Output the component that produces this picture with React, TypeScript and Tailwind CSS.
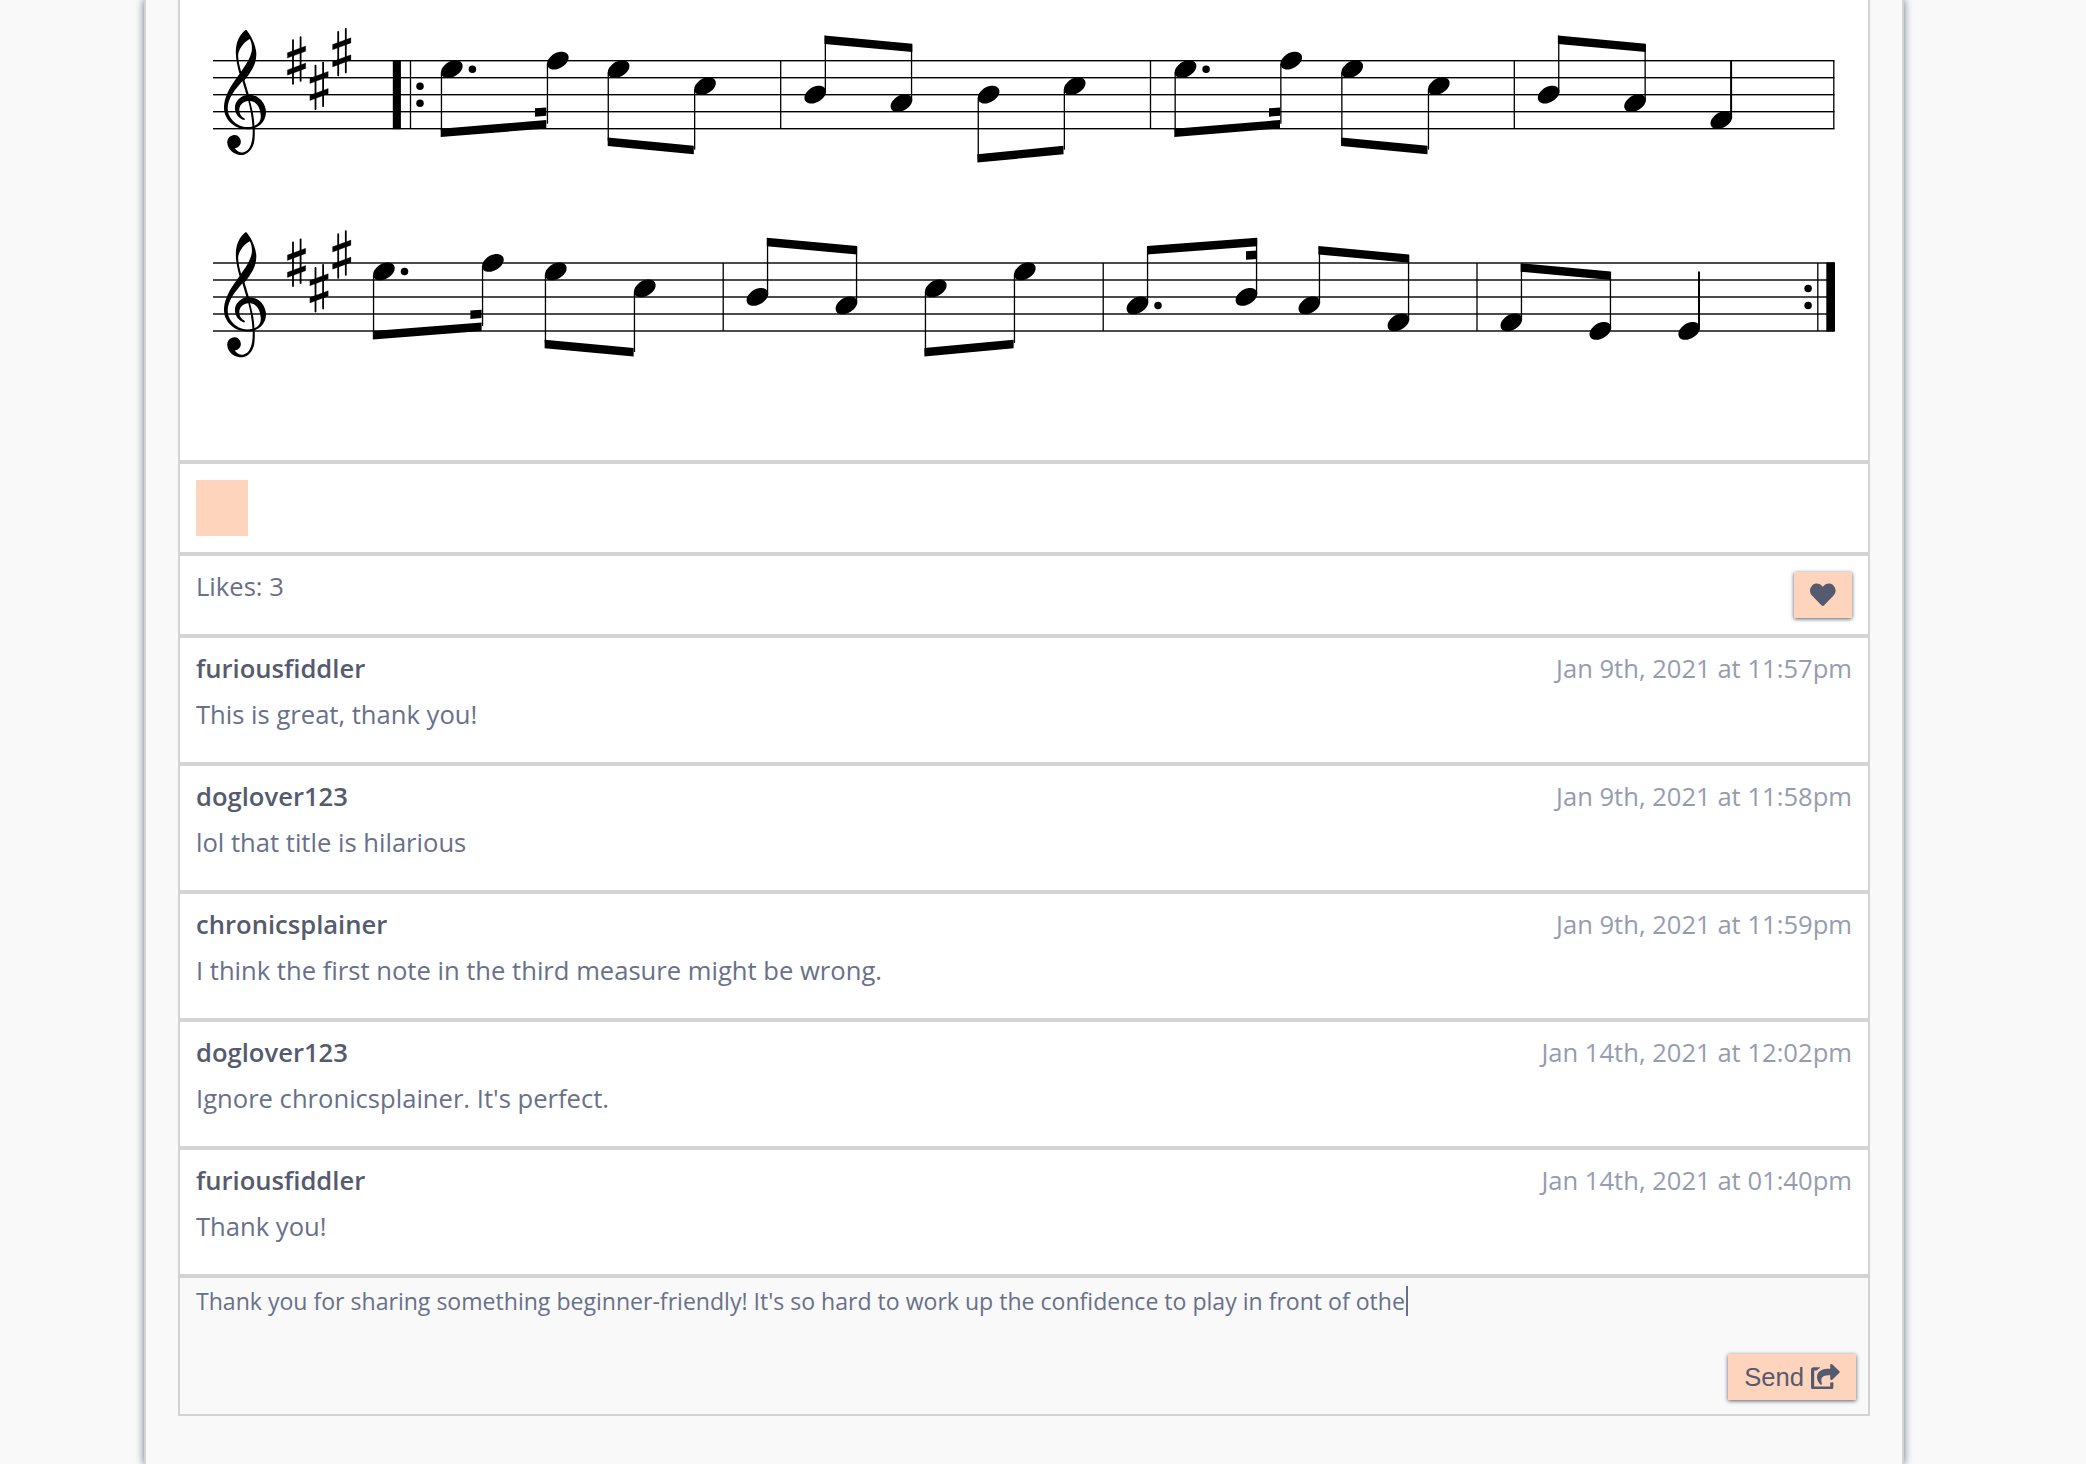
import React from "react";
import { FaHeart, FaShareSquare } from "react-icons/fa";

type Note = {
  x: number; // left edge of the head
  y: number; // head centre, measured from the top staff line
  stem: "up" | "down";
  end: number; // stem end, measured from the top staff line
  dot?: boolean;
  thick?: boolean;
};
type Beam = { x1: number; x2: number; y1: number; y2: number };
type Staff = { top: number; notes: Note[]; beams: Beam[]; bars: number[] };

const S = 17;
const START = 213;
const END = 1834.5;

const staves: Staff[] = [
  {
    top: 60.7,
    bars: [410.5, 780.7, 1150.5, 1514.3, 1833.8],
    notes: [
      { x: 441, y: 8.5, stem: "down", end: 70, dot: true },
      { x: 547, y: 0, stem: "down", end: 63 },
      { x: 607.8, y: 8.5, stem: "down", end: 80 },
      { x: 694.2, y: 25.5, stem: "down", end: 89 },
      { x: 804.4, y: 34, stem: "up", end: -25 },
      { x: 890.6, y: 42.5, stem: "up", end: -16 },
      { x: 977.8, y: 34, stem: "down", end: 98 },
      { x: 1063.9, y: 25.5, stem: "down", end: 89 },
      { x: 1174.7, y: 8.5, stem: "down", end: 70, dot: true },
      { x: 1280.4, y: 0, stem: "down", end: 63 },
      { x: 1341.4, y: 8.5, stem: "down", end: 80 },
      { x: 1428, y: 25.5, stem: "down", end: 89 },
      { x: 1537.8, y: 34, stem: "up", end: -25 },
      { x: 1624.2, y: 42.5, stem: "up", end: -16 },
      { x: 1710.5, y: 59.5, stem: "up", end: 0, thick: true },
    ],
    beams: [
      { x1: 440.7, x2: 546.3, y1: 68, y2: 59.3 },
      { x1: 535, x2: 546.3, y1: 47.6, y2: 46.7 },
      { x1: 607.7, x2: 693.8, y1: 76.8, y2: 85.1 },
      { x1: 824.5, x2: 912.3, y1: -25.2, y2: -17 },
      { x1: 977.4, x2: 1063.5, y1: 93.5, y2: 85.1 },
      { x1: 1174.3, x2: 1280, y1: 68, y2: 59.3 },
      { x1: 1269, x2: 1280, y1: 47.6, y2: 46.7 },
      { x1: 1341, x2: 1427.5, y1: 76.8, y2: 85.1 },
      { x1: 1557.9, x2: 1645.8, y1: -25.2, y2: -17 },
    ],
  },
  {
    top: 263,
    bars: [723.2, 1103.2, 1477, 1817.8],
    notes: [
      { x: 373.1, y: 8.5, stem: "down", end: 70, dot: true },
      { x: 482.1, y: 0, stem: "down", end: 63 },
      { x: 545, y: 8.5, stem: "down", end: 80 },
      { x: 634, y: 25.5, stem: "down", end: 89 },
      { x: 746.6, y: 34, stem: "up", end: -25 },
      { x: 835.6, y: 42.5, stem: "up", end: -16 },
      { x: 925, y: 25.5, stem: "down", end: 89 },
      { x: 1014, y: 8.5, stem: "down", end: 80 },
      { x: 1126.6, y: 42.5, stem: "up", end: -16, dot: true },
      { x: 1235.6, y: 34, stem: "up", end: -25 },
      { x: 1298.5, y: 42.5, stem: "up", end: -16 },
      { x: 1387.6, y: 59.5, stem: "up", end: -8 },
      { x: 1500.5, y: 59.5, stem: "up", end: 1 },
      { x: 1589.5, y: 68, stem: "up", end: 9 },
      { x: 1678.4, y: 68, stem: "up", end: 8.5, thick: true },
    ],
    beams: [
      { x1: 372.8, x2: 481.6, y1: 68, y2: 59.5 },
      { x1: 470.4, x2: 481.6, y1: 47.6, y2: 46.7 },
      { x1: 544.6, x2: 633.6, y1: 76.8, y2: 85.1 },
      { x1: 766.8, x2: 857.1, y1: -25.2, y2: -17 },
      { x1: 924.4, x2: 1013.6, y1: 85.1, y2: 76.8 },
      { x1: 1147, x2: 1257.1, y1: -17, y2: -25.2 },
      { x1: 1246, x2: 1257.1, y1: -11.7, y2: -12.5 },
      { x1: 1318.4, x2: 1409.1, y1: -17, y2: -8.6 },
      { x1: 1520.7, x2: 1610.8, y1: 0.3, y2: 8.5 },
    ],
  },
];

const CLEF =
  "M9.69-37.41c.09-.09.24-.06.36 0c.12.09.57.6.96 1.11c1.77 2.34 3.21 5.85 3.57 8.73c.21 1.56.03 3.27-.45 4.86c-.69 2.31-1.92 4.47-4.23 7.44c-.3.39-.57.72-.6.75c-.03.06 0 .15.18.78c.54 1.68 1.38 4.44 1.68 5.49l.09.42l.39 0c1.47.09 2.76.51 3.96 1.29c1.83 1.23 3.06 3.21 3.39 5.52c.09.45.12 1.29.06 1.74c-.09 1.02-.33 1.83-.75 2.73c-.84 1.71-2.28 3.06-4.02 3.72l-.33.12l.03 1.26c0 1.74-.06 3.63-.21 4.62c-.45 3.06-2.19 5.49-4.47 6.21c-.57.18-.9.21-1.59.21c-.69 0-1.02-.03-1.65-.21c-1.14-.27-2.13-.84-2.94-1.65c-.99-.99-1.56-2.16-1.71-3.54c-.09-.81.06-1.53.45-2.13c.63-.99 1.83-1.56 3-1.53c1.5.09 2.64 1.32 2.73 2.94c.06 1.47-.93 2.7-2.37 2.97l-.45.06l.12.15C6.1 18.3 7.6 18.7 8.9 18.4C12 17.6 13.2 13.5 13 7.6C9.5 8.2 6.3 7.7 3.7 5.6C1.1 3.5-.2.6-.1-2.4C.1-6 1.5-9.3 4-13.1C5-14.7 6.1-16.2 7-17.4C6.2-20.3 5.3-24 5.3-27.2C5.3-31.6 6.8-35.2 9.69-37.41zM11.7-33.3C9.6-32.4 7.3-29.6 6.5-26.9C6-24.7 7.1-20.8 7.7-18.5C9.7-21.2 12-24.6 12.6-28C12.8-30 12.5-31.9 11.7-33.3zM8.3-14.2C5.5-10.8 1.6-6.6 1.6-1.6C1.7 3.3 6.3 6.9 10.4 6.9C11.3 6.9 12.1 6.8 12.9 6.6C12.7 2.7 11.9-1.5 11-5C8.9-4.9 7-3.4 6.9-1.1C6.8.5 7.6 2.1 9.3 3C9.6 3.3 9.5 3.6 9.1 3.7C6.8 3.2 5 .9 4.9-1.7C4.7-4.5 7.2-7.3 10.2-7.8zM11.8-5C12.8-1.4 13.7 2.3 13.8 6.3C15.7 5.6 16.8 4 16.7 1.7C16.5-1.7 15.2-4.7 11.8-5z";

const HEAD =
  "M6.09-4.05c.36-.03 1.2 0 1.53.06c1.17.24 1.89.84 2.16 1.83c.06.18.06.3.06.66c0 .45 0 .63-.15 1.08c-.66 2.04-3.06 3.93-5.52 4.38c-.54.09-1.44.09-1.83.03c-1.23-.27-1.98-.87-2.25-1.86c-.06-.18-.06-.3-.06-.66c0-.45 0-.63.15-1.08c.24-.78.75-1.53 1.44-2.22c1.2-1.2 2.85-2.01 4.47-2.22z";

function Sharp({ x, y }: { x: number; y: number }) {
  return (
    <g transform={`translate(${x} ${y})`}>
      <rect x={4.7} y={3} width={1.8} height={45.4} rx={0.8} />
      <rect x={12.3} y={0} width={1.8} height={45.4} rx={0.8} />
      <path d="M0 16.5L18.3 9.7V15L0 21.8zM0 33.6L18.3 26.8V32.1L0 38.9z" stroke="black" strokeWidth={0.3} strokeLinejoin="round" />
    </g>
  );
}

function NoteMark({ note, top }: { note: Note; top: number }) {
  const y = top + note.y;
  const w = note.thick ? 2 : 1.3;
  const stemX = note.stem === "up" ? note.x + 21.6 - w : note.x - 0.2;
  const from = note.stem === "up" ? y - 2 : y + 3;
  const to = top + note.end;
  return (
    <g>
      <path d={HEAD} transform={`translate(${note.x} ${y}) scale(2.194)`} />
      <rect x={stemX} y={Math.min(from, to)} width={w} height={Math.abs(to - from)} />
      {note.dot && <circle cx={note.x + 31.4} cy={y} r={3.75} />}
    </g>
  );
}

function Score() {
  return (
    <svg className="block h-[460px] w-full" viewBox="180 0 1688 460" fill="black">
      {staves.map((s) => (
        <g key={s.top}>
          {[0, 1, 2, 3, 4].map((i) => (
            <rect key={i} x={START} y={s.top + i * S - 0.7} width={END - START} height={1.4} />
          ))}
          <path d={CLEF} fillRule="evenodd" transform={`translate(224.2 ${s.top + 51.3}) scale(2.19)`} />
          <Sharp x={287.4} y={s.top - 24.4} />
          <Sharp x={309.9} y={s.top + 1} />
          <Sharp x={332.6} y={s.top - 32.7} />
          {s.bars.map((x) => (
            <rect key={x} x={x - 0.65} y={s.top} width={1.3} height={4 * S} />
          ))}
          {s.notes.map((n) => (
            <NoteMark key={n.x} note={n} top={s.top} />
          ))}
          {s.beams.map((b) => (
            <path
              key={b.x1}
              d={`M${b.x1} ${s.top + b.y1}L${b.x2} ${s.top + b.y2}v8.4L${b.x1} ${s.top + b.y1 + 8.4}z`}
            />
          ))}
        </g>
      ))}
      <rect x={392.8} y={60.2} width={8.1} height={69} />
      <circle cx={420} cy={86.3} r={3.75} />
      <circle cx={420} cy={103.3} r={3.75} />
      <rect x={1826.3} y={262.4} width={8.7} height={69} />
      <circle cx={1808.1} cy={288.5} r={3.75} />
      <circle cx={1808.1} cy={305.5} r={3.75} />
    </svg>
  );
}

const comments = [
  { user: "furiousfiddler", date: "Jan 9th, 2021 at 11:57pm", text: "This is great, thank you!" },
  { user: "doglover123", date: "Jan 9th, 2021 at 11:58pm", text: "lol that title is hilarious" },
  { user: "chronicsplainer", date: "Jan 9th, 2021 at 11:59pm", text: "I think the first note in the third measure might be wrong." },
  { user: "doglover123", date: "Jan 14th, 2021 at 12:02pm", text: "Ignore chronicsplainer. It's perfect." },
  { user: "furiousfiddler", date: "Jan 14th, 2021 at 01:40pm", text: "Thank you!" },
];

const row = "border-2 border-[#d3d3d3] bg-white px-4";
const button =
  "flex h-[46px] items-center justify-center bg-[#ffd4bc] text-[#555b6e] shadow-[0_1px_4px_#555b6e]";

export default function App() {
  return (
    <div className="flex h-[1464px] justify-center overflow-hidden bg-[#f9f9f9] pr-[38px] font-['Open_Sans',sans-serif] text-[25.6px] leading-[36px] text-[#68708a]">
      <main className="w-[1760px] border-x-2 border-[#d3d3d3] bg-[#f9f9f9] px-8 shadow-[0_0_8px_#68708a]">
        <section className="h-[462px] border-2 border-t-0 border-[#d3d3d3] bg-white">
          <Score />
        </section>
        <section className={`${row} h-[92px] py-4`}>
          <div className="h-14 w-[52px] bg-[#ffd4bc]" />
        </section>
        <section className={`${row} flex h-[82px] items-start justify-between pt-4`}>
          <span className="-mt-[3px]">Likes: 3</span>
          <button className={`${button} w-[58px]`}>
            <FaHeart className="-mt-px size-[25.6px]" />
          </button>
        </section>
        {comments.map((c) => (
          <article key={c.date} className={`${row} h-32 pt-[13px]`}>
            <div className="flex justify-between">
              <h3 className="font-semibold text-[#555b6e]">{c.user}</h3>
              <time className="text-[#969cb0]">{c.date}</time>
            </div>
            <p className="mt-[10px]">{c.text}</p>
          </article>
        ))}
        <section className="flex h-[140px] flex-col justify-between border-2 border-[#d3d3d3] bg-[#f9f9f9] pr-3 pb-[14px] pl-4">
          <p className="flex items-center pt-[5px] text-[23.07px]">
            Thank you for sharing something beginner-friendly! It's so hard to work up the confidence to play in front of othe
            <span className="ml-px h-[30px] w-0.5 bg-[#68708a]" />
          </p>
          <button className={`${button} w-32 gap-[7px] self-end font-['Liberation_Sans',sans-serif]`}>
            Send
            <FaShareSquare className="-mt-px h-[25.6px] w-[28.8px]" />
          </button>
        </section>
      </main>
    </div>
  );
}
